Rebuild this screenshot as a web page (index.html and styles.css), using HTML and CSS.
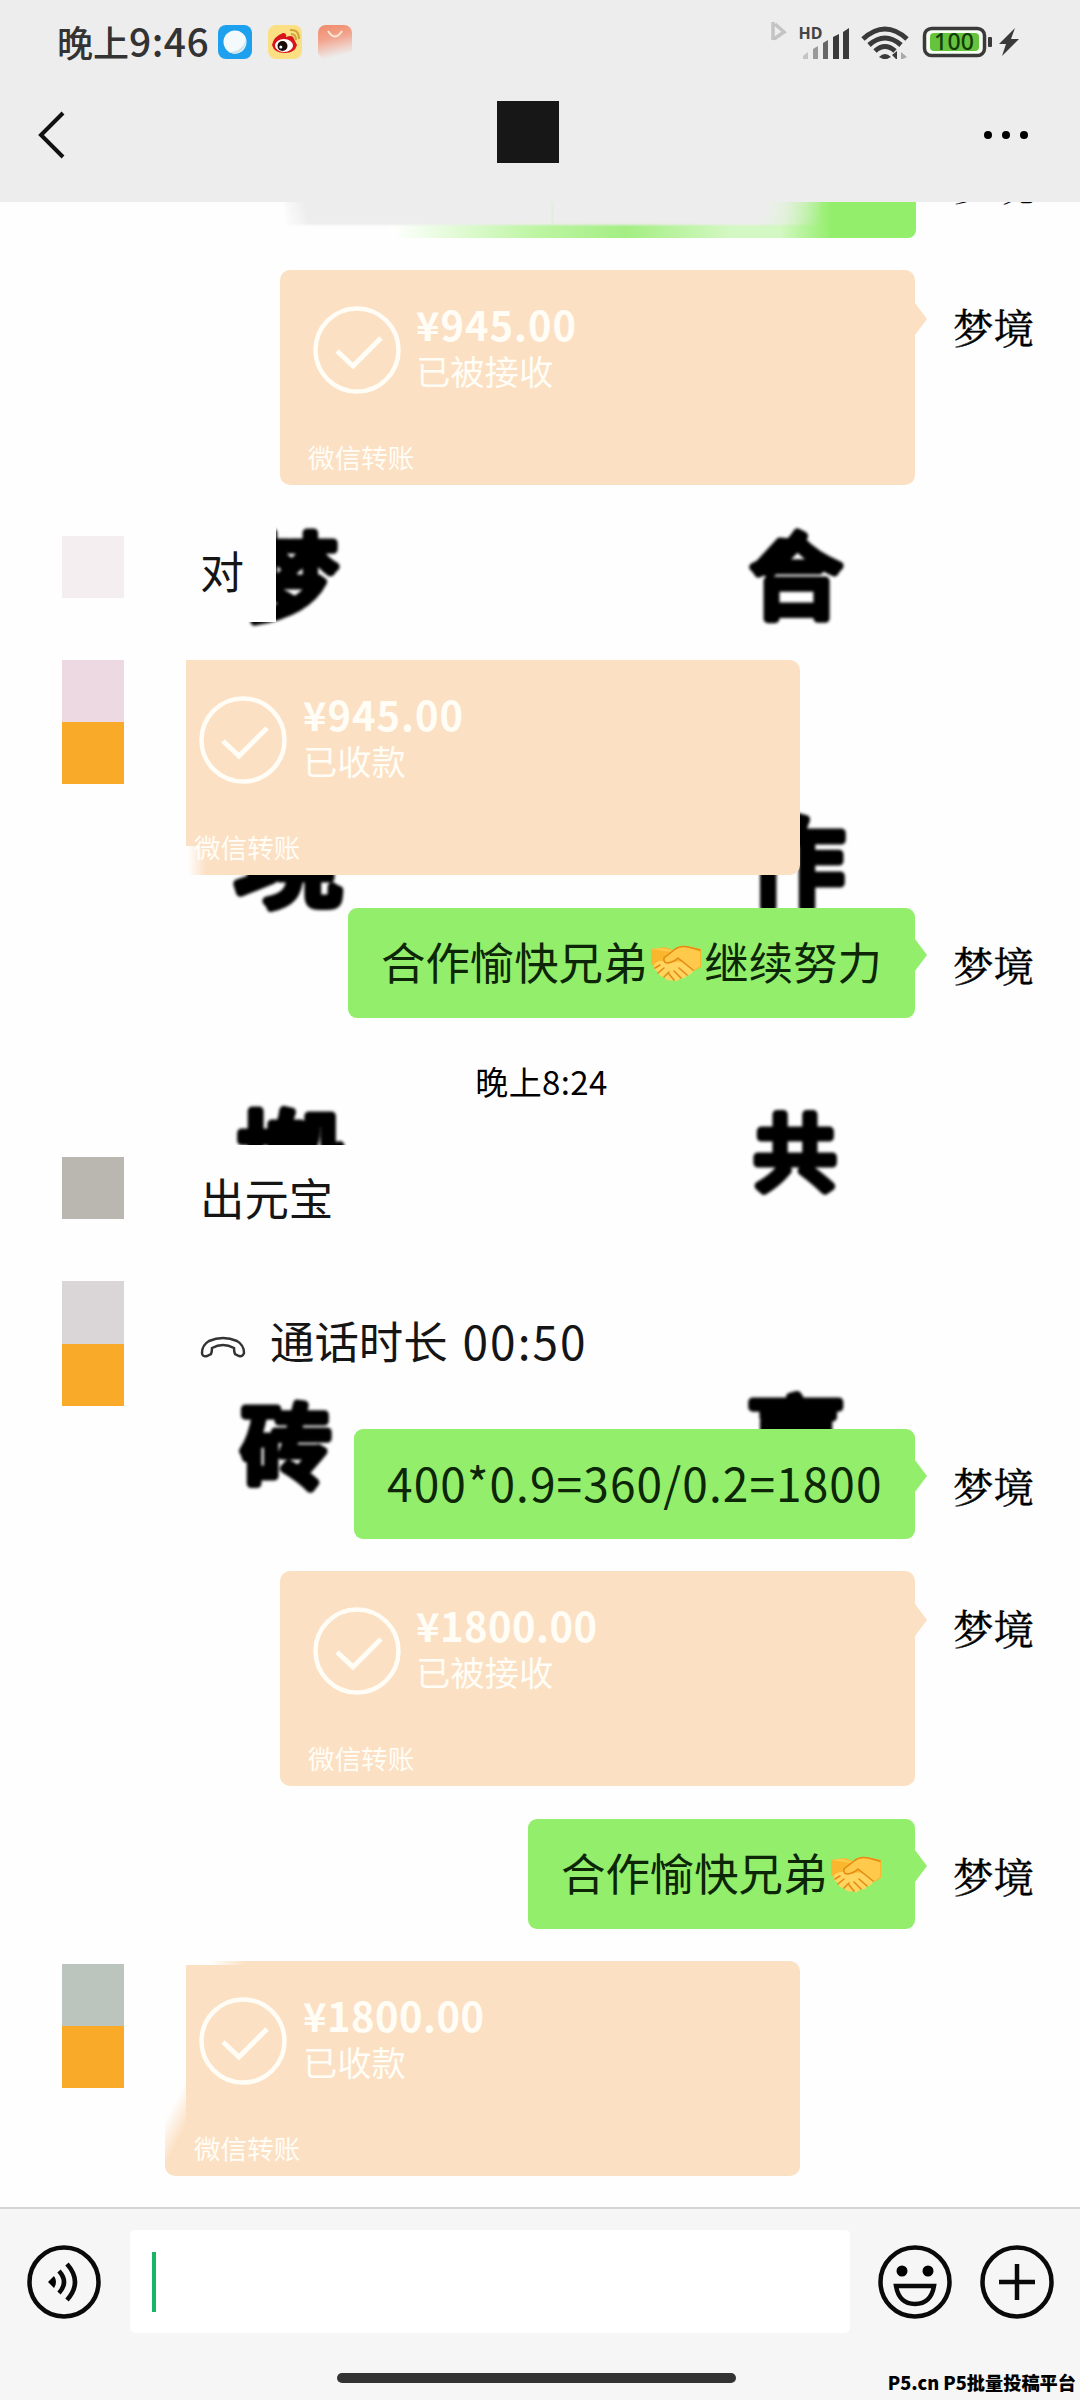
FILE: index.html
```html
<!DOCTYPE html>
<html lang="zh-CN">
<head>
<meta charset="utf-8">
<title>聊天</title>
<link rel="stylesheet" href="styles.css">
</head>
<body>
<svg width="0" height="0" class="defs">
  <defs>
    <symbol id="check" viewBox="0 0 88 88"><circle cx="44" cy="44" r="41.500" fill="none" stroke="#fffdf5" stroke-width="4.500"/><path d="M24 45l16 15 28-28" fill="none" stroke="#fffdf5" stroke-width="5"/></symbol>
    <symbol id="shake" viewBox="0 0 50 40">
      <path d="M0 5L14 3 22 6Q28 1 36 2L50 5V23L43 27 12 28 0 20Z" fill="#fbb62f"/>
      <path d="M3 20L8 17 39 18 42 27Q40 32 36 31 34 36 29 34 27 39 22 36 16 38 13 33 8 33 7 28 2 26 3 20Z" fill="#ffd45f"/>
      <path d="M0 5L12 4 23 7 14 13Q11 18 16 19 22 19 26 14L43 26 49 22V8L37 3Q28 2 20 8" fill="#ffca4c"/>
      <path d="M23 6L13 14Q12 19 17 19 23 18 27 14L42 26M28 24l8 7M23 27l7 7M18 30l5 6M4 24l5-3M7 29l6-5M13 33l5-5M23 6Q29 1 37 3L49 6" fill="none" stroke="#e58a14" stroke-width="1.600" stroke-linecap="round"/>
    </symbol>
  </defs>
</svg>
<div class="phone">
  <header class="head">
    <div class="status">
      <div class="clock">晚上<span class="clock-num">9:46</span></div>
      <svg class="app app-browser" viewBox="0 0 34 34"><rect width="34" height="34" rx="8" fill="#1da0ee"/><circle cx="17" cy="17" r="11.500" fill="#f4fafc"/><path d="M10 27Q26 27 28 12q1 14-11 17z" fill="#cfe3ea"/></svg>
      <svg class="app" viewBox="0 0 34 34"><rect width="34" height="34" rx="8" fill="#fddf83"/><path d="M4 20Q6 11 15 8q4 0 3 4 7-3 8 2l3 6q-2 8-12 8Q6 28 4 20z" fill="#d8131b"/><ellipse cx="16" cy="20.500" rx="9" ry="6.500" fill="#fff"/><circle cx="14.500" cy="21" r="5" fill="#1a0c08"/><circle cx="12.800" cy="22" r="1.500" fill="#fff"/><path d="M23 9q5 0 5 6M22 5q9-1 9 9" fill="none" stroke="#cfa437" stroke-width="2"/></svg>
      <svg class="app" viewBox="0 0 34 34"><defs><linearGradient id="fade" x1="0" y1="0" x2=".25" y2="1"><stop offset="0" stop-color="#ef8a68"/><stop offset=".45" stop-color="#f2a48d"/><stop offset="1" stop-color="#ededed"/></linearGradient></defs><rect width="34" height="34" rx="8" fill="url(#fade)"/><path d="M10 6q7 11 14 0" fill="none" stroke="#fbe9d8" stroke-width="2"/></svg>
      <svg class="signals" viewBox="0 0 260 40">
        <path d="M13 3v18M15 5l9 8-10 7" fill="none" stroke="#c4c4c4" stroke-width="3.500"/>
        <g fill="#3a3a3a"><path d="M83 13l6-4v31h-6zM73 18l6-3v25h-6z"/><path d="M63 24l5-3v19h-5z" fill="#666"/><path d="M53 30l5-3v13h-5z" fill="#999"/><path d="M43 37l5-4v7h-5z" fill="#c4c4c4"/></g>
        <text x="38.500" y="20" class="hd">HD</text>
        <g fill="none" stroke="#3a3a3a" stroke-width="5"><path d="M103 20Q125 0 147 20"/><path d="M109 26Q125 12 141 26"/><path d="M115 32Q125 23 135 32"/></g>
        <path d="M119 38q6-6 12 0l-6 3zM137 32v9l-5-5z" fill="#3a3a3a"/><path d="M141 41v-8l6 5z" fill="#aaa"/>
        <rect x="164.500" y="9.500" width="60" height="27" rx="7" fill="#f6fff2" stroke="#3a3a3a" stroke-width="3.500"/><rect x="170" y="14" width="49" height="18" rx="4" fill="#66c33e"/>
        <text x="174" y="31" class="level" textLength="40">100</text>
        <rect x="228" y="18" width="4" height="10" rx="1" fill="#3a3a3a"/>
        <path d="M255 9l-16 16h7l-4 12 17-17h-8z" fill="#3a3a3a"/>
      </svg>
    </div>
    <div class="nav">
      <svg class="back" viewBox="0 0 30 50"><path d="M26 3L4 25l22 22" fill="none" stroke="#111" stroke-width="4"/></svg>
      <div class="title-block"></div>
      <svg class="more" viewBox="0 0 44 10"><circle cx="4" cy="5" r="4"/><circle cx="22" cy="5" r="4"/><circle cx="40" cy="5" r="4"/></svg>
    </div>
  </header>

  <main class="chat">
    <svg class="marks" viewBox="0 0 1080 2005">
      <text x="291" y="411" font-size="94">梦</text>
      <text x="289" y="696" font-size="110">境</text>
      <text x="291" y="1000" font-size="108">搬</text>
      <text x="286" y="1278" font-size="90">砖</text>
      <text x="796" y="409" font-size="92">合</text>
      <text x="796" y="697" font-size="98">作</text>
      <text x="795" y="981" font-size="82">共</text>
      <text x="796" y="1274" font-size="94">赢</text>
      <path d="M780 340l-22 24 12 8 30-30z"/>
      <path d="M780 922v54"/>
    </svg>

    <section class="cut"><div class="cut-green"></div><div class="cut-smear"></div><div class="cut-name">梦境</div></section>

    <section class="row sent gap-a">
      <div class="card tail"><svg class="ok"><use href="#check"/></svg><div class="sum">¥945.00</div><div class="state">已被接收</div><div class="kind">微信转账</div></div>
      <div class="name">梦境</div>
    </section>

    <section class="row got gap-b short">
      <div class="ava"><i class="tile t-rose"></i></div><div class="plain plain-first">对</div>
    </section>

    <section class="row got gap-c">
      <div class="ava"><i class="tile t-pink"></i><i class="tile t-orange"></i></div>
      <div class="card left worn"><svg class="ok"><use href="#check"/></svg><div class="sum">¥945.00</div><div class="state">已收款</div><div class="kind">微信转账</div></div>
    </section>

    <section class="row sent gap-d">
      <div class="bubble tail w-long">合作愉快兄弟<svg class="shake"><use href="#shake"/></svg>继续努力</div>
      <div class="name">梦境</div>
    </section>

    <div class="time">晚上8:24</div>

    <section class="row got short gap-e">
      <div class="ava"><i class="tile t-grey"></i></div><div class="plain plain-box">出元宝</div>
    </section>

    <section class="row got gap-c">
      <div class="ava"><i class="tile t-mist"></i><i class="tile t-orange"></i></div>
      <div class="call"><svg class="handset" viewBox="0 0 46 22"><path d="M2 17Q2 9 9 5 23-1 37 5 44 9 44 17 43 21 39 20L35 18Q34 16 34 12 23 6 12 12 12 16 11 18L7 20Q2 21 2 17Z" fill="none" stroke="#333" stroke-width="2.500"/></svg><span>通话时长</span><span class="dur">00:50</span></div>
    </section>

    <section class="row sent gap-f">
      <div class="bubble tail w-sum"><span class="math">400*0.9=360/0.2=1800</span></div>
      <div class="name">梦境</div>
    </section>

    <section class="row sent gap-a">
      <div class="card tail"><svg class="ok"><use href="#check"/></svg><div class="sum sum-wide">¥1800.00</div><div class="state">已被接收</div><div class="kind">微信转账</div></div>
      <div class="name">梦境</div>
    </section>

    <section class="row sent gap-g">
      <div class="bubble tail w-mid">合作愉快兄弟<svg class="shake"><use href="#shake"/></svg></div>
      <div class="name">梦境</div>
    </section>

    <section class="row got gap-a">
      <div class="ava ava-low"><i class="tile t-sage"></i><i class="tile t-orange"></i></div>
      <div class="card left smudge"><svg class="ok"><use href="#check"/></svg><div class="sum sum-wide">¥1800.00</div><div class="state">已收款</div><div class="kind">微信转账</div></div>
    </section>
  </main>

  <footer class="foot">
    <div class="tools">
      <svg class="tool" viewBox="0 0 74 74"><circle cx="37" cy="37" r="34.500" fill="none" stroke="#0a0a0a" stroke-width="4.500"/><path d="M21 37l6-6q4 6 0 12z"/><path d="M32 26q10 11 0 22M40 19q16 18 0 36" fill="none" stroke="#0a0a0a" stroke-width="4.500"/></svg>
      <div class="input"><i class="caret"></i></div>
      <svg class="tool" viewBox="0 0 74 74"><circle cx="37" cy="37" r="34.500" fill="none" stroke="#0a0a0a" stroke-width="4.500"/><circle cx="24" cy="26" r="5.500"/><circle cx="50" cy="26" r="5.500"/><path d="M18 41h38q-3 18-19 18t-19-18z" fill="none" stroke="#0a0a0a" stroke-width="4.500"/></svg>
      <svg class="tool" viewBox="0 0 74 74"><circle cx="37" cy="37" r="34.500" fill="none" stroke="#0a0a0a" stroke-width="4.500"/><path d="M37 19v36M19 37h36" stroke="#0a0a0a" stroke-width="4.500"/></svg>
    </div>
    <div class="homebar"></div>
    <div class="credit">P5.cn P5批量投稿平台</div>
  </footer>
</div>
</body>
</html>
```
FILE: styles.css
```css
* { box-sizing: border-box; }
body { margin: 0; background: #fff; font-family: "Noto Sans CJK SC", "Noto Sans", sans-serif; color: #151515; }
.defs { position: absolute; }
.phone { width: 1080px; height: 2400px; display: flex; flex-direction: column; overflow: hidden; background: #fefefe; }

.head { height: 202px; background: #ededed; flex: none; }
.status { height: 84px; padding: 0 60px 0 57px; display: flex; align-items: center; }
.clock { width: 161px; font-size: 36px; line-height: 78px; margin-top: -4px; font-weight: 500; color: #333; white-space: nowrap; }
.clock-num { font-size: 39px; letter-spacing: .5px; }
.app { width: 34px; height: 34px; margin-right: 16px; }
.signals { width: 260px; height: 40px; margin: 0 0 6px auto; }
.hd { font: 700 16px "Noto Sans", sans-serif; fill: #444; }
.level { font: 500 23px "Noto Sans", sans-serif; fill: #123c08; }
.nav { height: 96px; padding: 0 52px 0 37px; display: grid; grid-template-columns: 460px 62px 1fr; align-items: center; }
.back { width: 30px; height: 50px; margin-top: 6px; }
.title-block { width: 62px; height: 62px; background: #171717; }
.more { width: 44px; height: 10px; justify-self: end; margin-top: 5px; }

.chat { position: relative; height: 2005px; flex: none; overflow: hidden; display: flex; flex-direction: column; isolation: isolate; }
.marks { position: absolute; z-index: -1; left: 0; top: 0; width: 1080px; height: 2005px; font-weight: 400; text-anchor: middle; fill: #000; stroke: #000; stroke-width: 9px; stroke-linejoin: round; stroke-linecap: round; filter: blur(1.6px); }

.cut { position: relative; height: 36px; overflow: hidden; flex: none; }
.cut-green { position: absolute; left: 390px; top: -20px; width: 526px; height: 56px; border-radius: 0 0 8px 8px; background: linear-gradient(90deg, #fff 0, #bdf5a2 28%, #a4ee83 45%, #d4f8c3 65%, #d4f8c3 74%, #93ee6b 84%); }
.cut-smear { position: absolute; left: 285px; top: -12px; width: 535px; height: 35px; background: linear-gradient(75deg, rgba(237,237,237,0), #ededed 9%) left / 50% 100% no-repeat, linear-gradient(105deg, #ededed 78%, rgba(237,237,237,0)) right / 50% 100% no-repeat; filter: blur(1px); }
.cut-name { position: absolute; left: 953px; top: -38px; font-family: "Noto Serif CJK SC", "Noto Sans CJK SC", serif; font-size: 40.500px; line-height: 40px; color: #000; }

.row { display: flex; flex: none; }
.sent { justify-content: flex-end; }
.got { padding-left: 62px; }
.gap-a { margin-top: 32px; }
.gap-b { margin-top: 51px; }
.gap-c { margin-top: 62px; }
.gap-d { margin-top: 33px; }
.gap-e { margin-top: 50px; }
.gap-f { margin-top: 23px; }
.gap-g { margin-top: 33px; }
.short { height: 62px; }

.name { width: 165px; padding-left: 38px; font-family: "Noto Serif CJK SC", "Noto Sans CJK SC", serif; font-size: 40.500px; line-height: 40px; margin-top: 37px; color: #000; -webkit-text-stroke: .4px #000; }
.ava { width: 62px; margin-right: 62px; flex: none; }
.ava-low { padding-top: 3px; }
.tile { display: block; height: 62px; }
.t-rose { background: #f5eef0; }
.t-pink { background: #ecd9e1; }
.t-orange { background: #f9aa29; }
.t-grey { background: #bab7b1; }
.t-mist { height: 63px; background: #dad6d8; }
.t-sage { background: #bbc5be; }

.card { position: relative; width: 635px; height: 215px; border-radius: 10px; background: #fce0c3; color: #fffdf6; display: grid; grid-template-columns: 88px 1fr; grid-template-rows: 48px 44px 1fr; column-gap: 15px; padding: 30px 0 11px 33px; }
.card.left { width: 614px; padding-left: 13px; column-gap: 16px; border-radius: 0 10px 10px 0; }
.ok { width: 88px; height: 88px; grid-row: 1 / 3; margin-top: 6px; }
.sum { font-size: 40px; line-height: 48px; font-weight: 700; letter-spacing: .9px; }
.sum-wide { letter-spacing: .4px; }
.state { font-size: 34.300px; line-height: 44px; }
.kind { grid-column: 1 / 3; align-self: end; font-size: 26.600px; line-height: 34px; margin-left: -5px; }
.tail::after { content: ""; position: absolute; left: 100%; top: 33px; border: 12px solid transparent; border-left-color: #93ee6b; border-right: 0; border-top-width: 16px; border-bottom-width: 16px; }
.card.tail::after { border-left-color: #fce0c3; }
.worn { border-bottom-left-radius: 0; }
.worn::before { content: ""; position: absolute; left: -8px; bottom: 0; width: 28px; height: 29px; background: linear-gradient(90deg, #fefefe 35%, rgba(254,254,254,0)); }
.smudge::before { content: ""; position: absolute; left: -21px; bottom: 0; width: 22px; height: 95px; border-bottom-left-radius: 10px; background: linear-gradient(118deg, rgba(252,224,195,0) 28%, #fce0c3 62%); }
.smudge::after { content: ""; position: absolute; left: 0; top: 0; width: 60px; height: 4px; background: linear-gradient(90deg, #fefefe 40%, rgba(254,254,254,0)); }

.bubble { position: relative; height: 110px; border-radius: 9px; background: #93ee6b; font-size: 44.400px; line-height: 106px; padding: 0 0 4px 33px; display: flex; align-items: center; white-space: nowrap; color: #0c2606; }
.bubble.tail::after { top: 31px; }
.w-long { width: 567px; }
.w-sum { width: 561px; }
.w-mid { width: 387px; }
.shake { width: 50px; height: 40px; margin: 5px 3px 0 4px; flex: none; }
.math { font-size: 46px; letter-spacing: 1.1px; }

.plain { font-size: 44px; line-height: 62px; padding-left: 14px; background: #fefefe; }
.plain-first { width: 90px; height: 100px; margin: -14px 0 -24px; padding-top: 17px; }
.plain-box { width: 190px; margin-top: -12px; padding-top: 21px; height: 90px; font-size: 44.400px; }
.call { display: flex; align-items: center; height: 118px; padding-left: 14px; font-size: 44.400px; line-height: 60px; }
.handset { width: 46px; height: 22px; margin: 13px 24px 0 0; }
.dur { font-size: 46px; margin-left: 15px; letter-spacing: 2px; }
.time { flex: none; height: 39px; margin-top: 50px; text-align: center; font-size: 33px; line-height: 26px; color: #000; padding-left: 3px; letter-spacing: .4px; }

.foot { position: relative; flex: 1; background: #f6f6f6; border-top: 2px solid #d5d5d5; }
.tools { display: flex; align-items: center; height: 103px; margin-top: 21px; padding-left: 27px; }
.tool { width: 74px; height: 74px; flex: none; }
.input { width: 720px; height: 103px; margin: 0 28px 0 29px; border-radius: 5px; background: #fff; padding: 22px; }
.input + .tool { margin-right: 28px; }
.caret { display: block; width: 4px; height: 60px; background: #18b566; }
.homebar { width: 399px; height: 10px; border-radius: 5px; background: #333; margin: 40px 0 0 337px; }
.credit { position: absolute; right: 4px; top: 160px; font-size: 18.200px; line-height: 26px; font-weight: 900; color: #000; white-space: nowrap; }
```
